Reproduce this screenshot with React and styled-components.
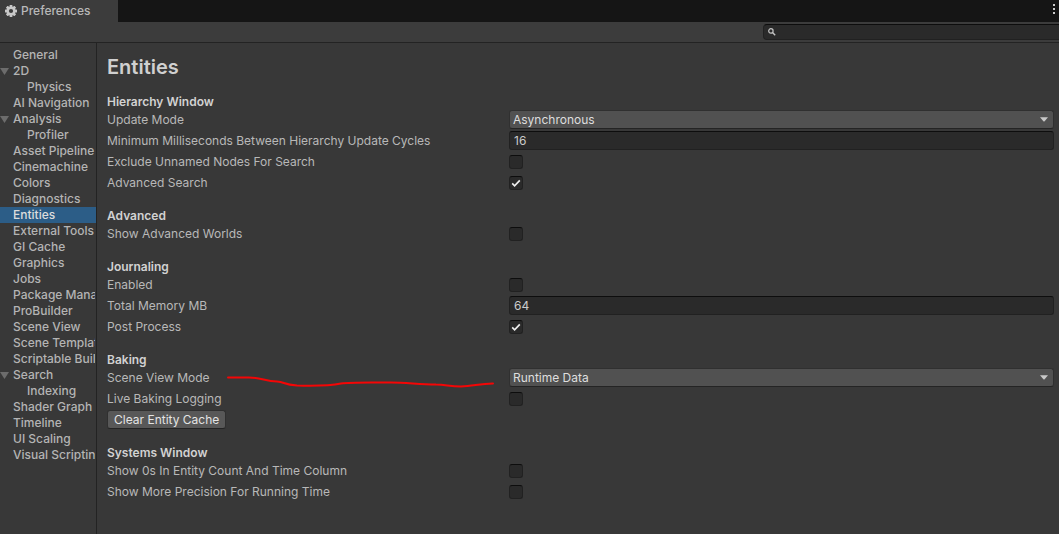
import React from "react";
import styled, { createGlobalStyle, css } from "styled-components";

const GlobalStyle = createGlobalStyle`
  *, *::before, *::after { box-sizing: border-box; }
  body {
    margin: 0;
    background: #383838;
    color: #b8b8b8;
    font: 400 12px/16px Inter, "Liberation Sans", sans-serif;
  }
  button, input, select { font: inherit; color: inherit; margin: 0; }
`;

const Window = styled.div`
  display: flex;
  flex-direction: column;
  min-height: 100vh;
`;

const TabBar = styled.header`
  display: flex;
  justify-content: space-between;
  height: 22px;
  background: #151515;
`;

const Tab = styled.button`
  display: flex;
  align-items: center;
  gap: 4px;
  width: 118px;
  padding: 0 0 0 5px;
  border: 0;
  background: #3c3c3c;
  font-weight: 500;
`;

const MenuButton = styled.button`
  display: flex;
  align-items: flex-start;
  padding: 4px 3px 0;
  border: 0;
  background: none;
`;

const Toolbar = styled.div`
  display: flex;
  justify-content: flex-end;
  align-items: center;
  height: 21px;
  border-bottom: 1px solid #232323;
  background: #3c3c3c;
`;

const SearchBox = styled.label`
  display: flex;
  align-items: center;
  gap: 6px;
  width: 296px;
  height: 16px;
  padding-left: 4px;
  border: 1px solid #212121;
  border-top-color: #0d0d0d;
  border-right: 0;
  border-radius: 4px 0 0 4px;
  background: #2a2a2a;
`;

const SearchInput = styled.input`
  flex: 1;
  min-width: 0;
  height: 14px;
  padding: 0;
  border: 0;
  outline: 0;
  background: none;
`;

const Body = styled.div`
  display: flex;
  flex: 1;
`;

const Sidebar = styled.nav`
  flex: 0 0 97px;
  padding: 4px 0;
  border-right: 1px solid #232323;
  overflow: hidden;
`;

const NavItem = styled.a`
  display: flex;
  align-items: center;
  height: 16px;
  padding-left: ${(p) => (p.$nested ? 27 : p.$group ? 0 : 13)}px;
  padding-right: 1px;
  text-decoration: none;
  font-weight: 500;
  color: #b4b4b4;
  ${(p) =>
    p.$active &&
    css`
      background: #2c5d87;
      color: #dcdcdc;
    `}
`;

const NavText = styled.span`
  flex: 1;
  min-width: 0;
  overflow: hidden;
  white-space: nowrap;
`;

const Foldout = styled.svg`
  flex: none;
  width: 9px;
  height: 8px;
  margin-right: 4px;
`;

const Content = styled.main`
  flex: 1;
  min-width: 0;
  padding: 12px 5px 24px 10px;
`;

const Title = styled.h1`
  margin: 0 0 14px;
  font-size: 20px;
  line-height: 24px;
  font-weight: 600;
  color: #d0d0d0;
`;

const Section = styled.section`
  margin-bottom: 14px;
`;

const SectionTitle = styled.h2`
  margin: 0;
  padding-top: 1px;
  font-size: 12px;
  line-height: 15px;
  font-weight: 600;
  color: #d2d2d2;
`;

const Row = styled.div`
  display: grid;
  grid-template-columns: 402fr 545fr;
  align-items: center;
  height: 21px;
`;

const Label = styled.label`
  white-space: nowrap;
`;

const SelectWrap = styled.div`
  display: grid;
  align-items: center;
  justify-items: end;
  > * { grid-area: 1 / 1; }
`;

const Select = styled.select`
  appearance: none;
  width: 100%;
  height: 19px;
  padding: 0 20px 0 3px;
  border: 1px solid #303030;
  border-bottom-color: #242424;
  border-radius: 3px;
  background: #515151;
  color: #dedede;
`;

const Arrow = styled.svg`
  width: 8px;
  height: 5px;
  margin-right: 6px;
  pointer-events: none;
`;

const fieldSurface = css`
  border: 1px solid #212121;
  border-top-color: #0d0d0d;
  border-radius: 3px;
  background: #2a2a2a;
`;

const TextInput = styled.input`
  width: 100%;
  height: 19px;
  padding: 0 4px;
  outline: 0;
  color: #cbcbcb;
  ${fieldSurface}
`;

const CheckWrap = styled.div`
  display: grid;
  width: 14px;
  height: 14px;
  > * { grid-area: 1 / 1; }
`;

const CheckBox = styled.input`
  appearance: none;
  width: 14px;
  height: 14px;
  ${fieldSurface}
  &:not(:checked) + svg { visibility: hidden; }
`;

const Tick = styled.svg`
  width: 14px;
  height: 14px;
  pointer-events: none;
`;

const ActionButton = styled.button`
  height: 19px;
  padding: 0 6px;
  border: 1px solid #303030;
  border-bottom-color: #242424;
  border-radius: 3px;
  background: #585858;
  color: #e4e4e4;
`;

const Marker = styled.svg`
  position: absolute;
  left: 120px;
  top: 7px;
  width: 268px;
  height: 14px;
  pointer-events: none;
`;

const MarkedRow = styled.div`
  position: relative;
`;

const NAV = [
  { name: "General" },
  { name: "2D", group: true },
  { name: "Physics", nested: true },
  { name: "AI Navigation" },
  { name: "Analysis", group: true },
  { name: "Profiler", nested: true },
  { name: "Asset Pipeline" },
  { name: "Cinemachine" },
  { name: "Colors" },
  { name: "Diagnostics" },
  { name: "Entities", active: true },
  { name: "External Tools" },
  { name: "GI Cache" },
  { name: "Graphics" },
  { name: "Jobs" },
  { name: "Package Manager" },
  { name: "ProBuilder" },
  { name: "Scene View" },
  { name: "Scene Template" },
  { name: "Scriptable Build" },
  { name: "Search", group: true },
  { name: "Indexing", nested: true },
  { name: "Shader Graph" },
  { name: "Timeline" },
  { name: "UI Scaling" },
  { name: "Visual Scripting" },
];

function GearIcon() {
  return (
    <svg width="12" height="12" viewBox="0 0 12 12" aria-hidden="true">
      <g fill="#c8c8c8">
        {[0, 45, 90, 135].map((a) => (
          <rect key={a} x="4.6" y="0" width="2.8" height="12" rx="0.5" transform={`rotate(${a} 6 6)`} />
        ))}
        <circle cx="6" cy="6" r="4.5" />
      </g>
      <circle cx="6" cy="6" r="2.1" fill="#3c3c3c" />
    </svg>
  );
}

function SelectField({ id, label, options }) {
  return (
    <Row>
      <Label htmlFor={id}>{label}</Label>
      <SelectWrap>
        <Select id={id}>
          {options.map((o) => (
            <option key={o}>{o}</option>
          ))}
        </Select>
        <Arrow viewBox="0 0 8 5" aria-hidden="true">
          <path d="M0 0.3H8L4.6 4.2Q4 4.8 3.4 4.2Z" fill="#c8c8c8" />
        </Arrow>
      </SelectWrap>
    </Row>
  );
}

function TextField({ id, label, value }) {
  return (
    <Row>
      <Label htmlFor={id}>{label}</Label>
      <TextInput id={id} type="text" defaultValue={value} />
    </Row>
  );
}

function CheckField({ id, label, checked }) {
  return (
    <Row>
      <Label htmlFor={id}>{label}</Label>
      <CheckWrap>
        <CheckBox id={id} type="checkbox" defaultChecked={checked} />
        <Tick viewBox="0 0 14 14" aria-hidden="true">
          <path d="M3.2 7.4L5.6 9.8L10.8 4.4" fill="none" stroke="#eeeeee" strokeWidth="1.7" />
        </Tick>
      </CheckWrap>
    </Row>
  );
}

export default function App() {
  return (
    <Window>
      <GlobalStyle />
      <TabBar>
        <Tab type="button">
          <GearIcon />
          Preferences
        </Tab>
        <MenuButton type="button" aria-label="Window menu">
          <svg width="4" height="10" viewBox="0 0 4 10" aria-hidden="true">
            <path d="M1 0h2v2H1zM1 4h2v2H1zM1 8h2v2H1z" fill="#c8c8c8" />
          </svg>
        </MenuButton>
      </TabBar>
      <Toolbar>
        <SearchBox>
          <svg width="8" height="8" viewBox="0 0 8 8" aria-hidden="true">
            <circle cx="2.9" cy="2.9" r="2.2" fill="none" stroke="#c4c4c4" strokeWidth="1.2" />
            <path d="M4.5 4.5L7.2 7.2" stroke="#c4c4c4" strokeWidth="1.4" />
          </svg>
          <SearchInput type="text" aria-label="Search preferences" />
        </SearchBox>
      </Toolbar>
      <Body>
        <Sidebar>
          {NAV.map((n) => (
            <NavItem key={n.name} href="#" $nested={n.nested} $group={n.group} $active={n.active}>
              {n.group && (
                <Foldout viewBox="0 0 9 8" aria-hidden="true">
                  <path d="M0 1H9L4.5 8Z" fill="#6c6c6c" />
                </Foldout>
              )}
              <NavText>{n.name}</NavText>
            </NavItem>
          ))}
        </Sidebar>
        <Content>
          <Title>Entities</Title>
          <Section>
            <SectionTitle>Hierarchy Window</SectionTitle>
            <SelectField id="update-mode" label="Update Mode" options={["Asynchronous", "Synchronous"]} />
            <TextField id="min-ms" label="Minimum Milliseconds Between Hierarchy Update Cycles" value="16" />
            <CheckField id="exclude" label="Exclude Unnamed Nodes For Search" />
            <CheckField id="adv-search" label="Advanced Search" checked />
          </Section>
          <Section>
            <SectionTitle>Advanced</SectionTitle>
            <CheckField id="adv-worlds" label="Show Advanced Worlds" />
          </Section>
          <Section>
            <SectionTitle>Journaling</SectionTitle>
            <CheckField id="enabled" label="Enabled" />
            <TextField id="memory" label="Total Memory MB" value="64" />
            <CheckField id="post" label="Post Process" checked />
          </Section>
          <Section>
            <SectionTitle>Baking</SectionTitle>
            <MarkedRow>
              <SelectField id="scene-mode" label="Scene View Mode" options={["Runtime Data", "Authoring Data"]} />
              <Marker viewBox="0 0 268 14" aria-hidden="true">
                <path
                  d="M1 3.5H22C34 3.5 38 7 50 7.5C58 8 56 10.5 70 11.5C88 12 104 11.5 114 9.5C124 8 140 8.5 164 8.5C178 8.5 190 10 209 10.5C219 10.5 222 12.5 234 12.5C246 12.5 252 9.5 266 9.5"
                  fill="none"
                  stroke="#f40606"
                  strokeWidth="2"
                  strokeLinecap="round"
                />
              </Marker>
            </MarkedRow>
            <CheckField id="live-bake" label="Live Baking Logging" />
            <Row>
              <div>
                <ActionButton type="button">Clear Entity Cache</ActionButton>
              </div>
            </Row>
          </Section>
          <Section>
            <SectionTitle>Systems Window</SectionTitle>
            <CheckField id="zeros" label="Show 0s In Entity Count And Time Column" />
            <CheckField id="precision" label="Show More Precision For Running Time" />
          </Section>
        </Content>
      </Body>
    </Window>
  );
}
